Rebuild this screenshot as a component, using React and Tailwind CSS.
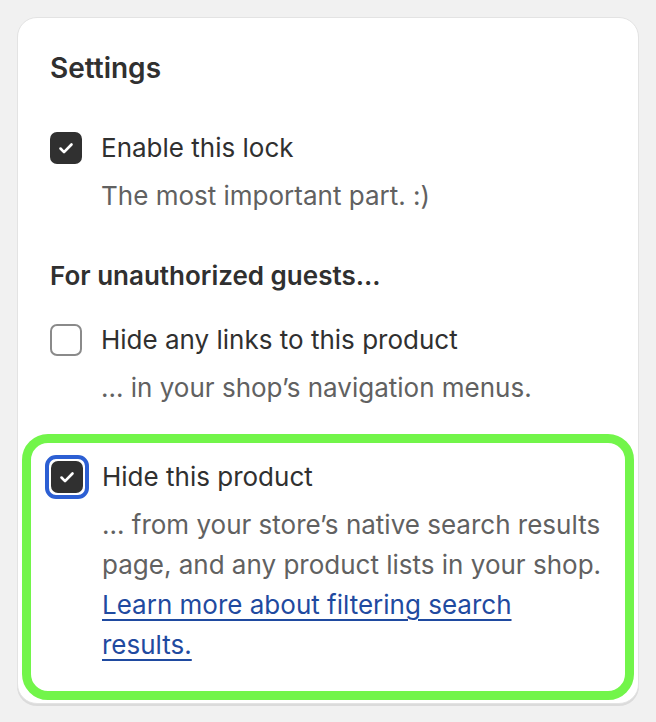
import React from 'react'

function Check() {
  return (
    <svg viewBox="0 0 20 20" width="22" height="22" fill="none">
      <path d="M5 10.5l3.2 3.2L15 6.8" stroke="#fff" strokeWidth="2.4" strokeLinecap="round" strokeLinejoin="round" />
    </svg>
  )
}

function Box({ checked, focused }) {
  return (
    <span className="relative flex h-10 items-center flex-shrink-0">
      {focused && (
        <span className="absolute left-[-6px] top-[-2px] w-[44px] h-[44px] rounded-[11px] border-[4px] border-[#2c5fd3]" />
      )}
      {checked ? (
        <span className="flex items-center justify-center w-8 h-8 rounded-[7px] bg-[#303030]">
          <Check />
        </span>
      ) : (
        <span className="w-8 h-8 rounded-[7px] border-2 border-[#8a8a8a] bg-white" />
      )}
    </span>
  )
}

function Choice({ checked, focused, label, children }) {
  return (
    <div className="flex gap-[19px]">
      <Box checked={checked} focused={focused} />
      <div className="flex flex-col gap-2">
        <span className="text-[26px] leading-10 text-[#303030]">{label}</span>
        <div className="text-[26px] leading-10 text-[#616161]">{children}</div>
      </div>
    </div>
  )
}

export default function App() {
  return (
    <div className="min-h-[722px] bg-[#f1f1f1] p-[17px]" style={{ fontFamily: 'Inter, "Noto Sans", sans-serif' }}>
      <div className="w-[622px] h-[687px] bg-white rounded-[20px] border border-[#e3e3e3] shadow-[0_2px_0_0_rgba(0,0,0,0.09)] pt-[30px] px-8 flex flex-col">
        <h2 className="text-[28px] leading-10 font-semibold text-[#303030]">Settings</h2>

        <div className="mt-10">
          <Choice checked label="Enable this lock">The most important part. :)</Choice>
        </div>

        <h3 className="mt-10 text-[26px] leading-10 font-semibold text-[#303030]">For unauthorized guests...</h3>

        <div className="mt-6">
          <Choice label="Hide any links to this product">... in your shop’s navigation menus.</Choice>
        </div>

        <div className="mt-[26px] -mx-[28px] rounded-[26px] border-[9px] border-[#72f54a] pl-[20px] pr-4 pt-[14px] pb-[26px]">
          <Choice checked focused label="Hide this product">
            ... from your store’s native search results<br />
            page, and any product lists in your shop.<br />
            <a href="#" className="text-[#1f4aa0] underline decoration-2 underline-offset-[5px]">
              Learn more about filtering search<br />
              results.
            </a>
          </Choice>
        </div>
      </div>
    </div>
  )
}
